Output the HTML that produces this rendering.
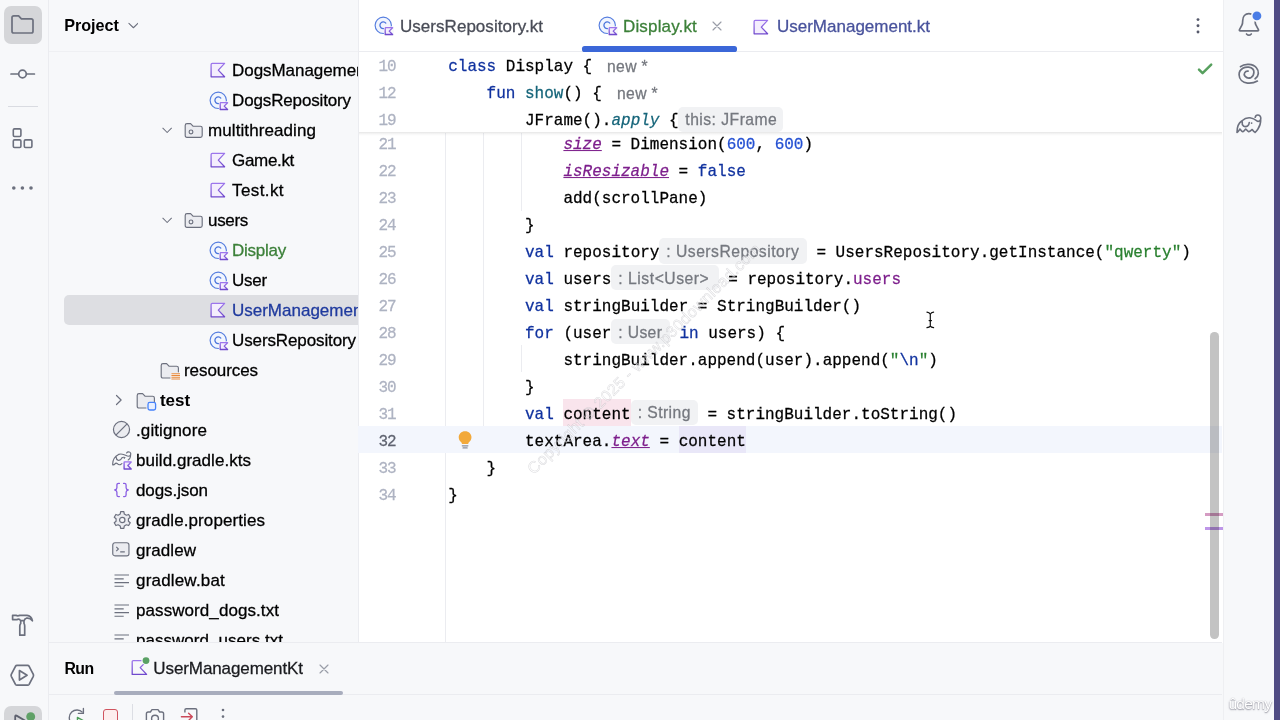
<!DOCTYPE html>
<html><head><meta charset="utf-8"><title>IDE</title>
<style>
*{box-sizing:border-box}
html,body{margin:0;padding:0}
body{will-change:transform;width:1280px;height:720px;overflow:hidden;position:relative;background:#f7f8fa;font-family:"Liberation Sans",sans-serif}
.ab{position:absolute}
.lstrip{position:absolute;left:0;top:0;width:49px;height:720px;background:#f7f8fa;border-right:1px solid #ebecf0}
.ppanel{position:absolute;left:49px;top:0;width:309px;height:643px;background:#f7f8fa}
.selbtn{position:absolute;background:#d5d6d9;border-radius:7px}
.treeclip{position:absolute;left:49px;top:52px;width:309px;height:590.5px;overflow:hidden}
.treeclip>*{margin-left:-49px;margin-top:-52px}
.lb{position:absolute;white-space:pre;line-height:20px;height:20px;font-family:"Liberation Sans",sans-serif}
.ed{position:absolute;left:358px;top:0;width:865.5px;height:643px;background:#fff;border-left:1px solid #ebecf0}
.cl{position:absolute;white-space:pre;font:16px/27px "Liberation Mono",monospace;height:27px;transform:scaleY(1.035);transform-origin:0 17px;-webkit-text-stroke:0.25px}
.ln{color:#aeb3c2;letter-spacing:-1.1px}
.pi{font-style:italic;text-decoration:underline;text-decoration-thickness:1.2px;text-underline-offset:1.2px}
.it{font-style:italic}
.hb{position:absolute;background:#f1f2f4;border-radius:5px}
.sticky{position:absolute;left:359px;top:52px;width:863px;height:80px;background:#fff}
.sticky:after{content:'';position:absolute;left:0;right:0;top:80px;height:4px;background:linear-gradient(rgba(0,0,0,.10),rgba(0,0,0,.03) 50%,rgba(0,0,0,0))}
.selrow .kbg,.selrow{}
.edi .kbg{fill:#fff}
.wm{font:16px "Liberation Sans",sans-serif;color:rgba(255,255,255,.55);-webkit-text-stroke:0.55px rgba(110,110,120,.24);transform-origin:0 0;transform:translate(4px,113px) rotate(-44.6deg);white-space:pre;letter-spacing:.35px}
</style></head>
<body>

<svg width="0" height="0" style="position:absolute">
<defs>
<linearGradient id="kg" x1="0" y1="0" x2="0" y2="1"><stop offset="0" stop-color="#9d76ec"/><stop offset="1" stop-color="#7049cd"/></linearGradient>
<symbol id="i-kt" viewBox="0 0 16 16">
  <path d="M2.2 1.4 H14.6 L8.3 8.1 L14.6 14.8 H1.1 V2.5 Q1.1 1.4 2.2 1.4 Z" fill="#f4eefd" stroke="url(#kg)" stroke-width="1.25" stroke-linejoin="round"/>
</symbol>
<symbol id="i-cls" viewBox="0 0 21 21">
  <circle cx="10.25" cy="9.3" r="8.15" fill="#f1f5fe" stroke="#557ddf" stroke-width="1.15"/>
  <path d="M12.8 7.1 A3.35 3.35 0 1 0 12.8 11.5" fill="none" stroke="#4a74dc" stroke-width="1.3" stroke-linecap="round"/>
  <path d="M10.9 10.4 H21 V20 H10.9 Z" fill="#f7f8fa" class="kbg"/>
  <path d="M12.8 11.7 H19.6 L16.2 15.1 L19.6 18.5 H12.2 V12.3 Q12.2 11.7 12.8 11.7 Z" fill="#f4eefd" stroke="url(#kg)" stroke-width="1.3" stroke-linejoin="round"/>
</symbol>
<symbol id="i-pkg" viewBox="0 0 20 18">
  <path d="M1.2 3.4 Q1.2 1.6 3 1.6 H6.6 L9 4.2 H16.4 Q18.2 4.2 18.2 6 V13.6 Q18.2 15.4 16.4 15.4 H3 Q1.2 15.4 1.2 13.6 Z" fill="#ebecf0" stroke="#6c707e" stroke-width="1.15" stroke-linejoin="round"/>
  <circle cx="7" cy="9.9" r="1.9" fill="none" stroke="#6c707e" stroke-width="1.15"/>
</symbol>
<symbol id="i-res" viewBox="0 0 22 20">
  <path d="M1.2 3.4 Q1.2 1.6 3 1.6 H6.6 L9 4.2 H16.6 Q18.4 4.2 18.4 6 V11 H11 V16 H3 Q1.2 16 1.2 14.2 Z" fill="#ebecf0" stroke="none"/>
  <path d="M10 16 H3 Q1.2 16 1.2 14.2 V3.4 Q1.2 1.6 3 1.6 H6.6 L9 4.2 H16.6 Q18.4 4.2 18.4 6 V9.8" fill="none" stroke="#6c707e" stroke-width="1.15" stroke-linejoin="round" stroke-linecap="round"/>
  <path d="M11.4 11.7 H20 M11.4 13.5 H20 M11.4 15.2 H20 M11.4 16.9 H20" stroke="#e8883a" stroke-width="1.05" fill="none"/>
</symbol>
<symbol id="i-tst" viewBox="0 0 22 20">
  <path d="M1.2 3.4 Q1.2 1.6 3 1.6 H6.6 L9 4.2 H16.6 Q18.4 4.2 18.4 6 V11 H11 V16 H3 Q1.2 16 1.2 14.2 Z" fill="#ebecf0" stroke="none"/>
  <path d="M10 16 H3 Q1.2 16 1.2 14.2 V3.4 Q1.2 1.6 3 1.6 H6.6 L9 4.2 H16.6 Q18.4 4.2 18.4 6 V9.4" fill="none" stroke="#6c707e" stroke-width="1.15" stroke-linejoin="round" stroke-linecap="round"/>
  <rect x="12" y="10.4" width="7.6" height="7.6" rx="1.8" fill="#e7efff" stroke="#4682fa" stroke-width="1.3"/>
</symbol>
<symbol id="i-ign" viewBox="0 0 19 19">
  <circle cx="9.5" cy="9.5" r="8.05" fill="#ebecf0" stroke="#6c707e" stroke-width="1.2"/>
  <path d="M3.9 15.1 L15.1 3.9" stroke="#6c707e" stroke-width="1.2"/>
</symbol>
<symbol id="i-gkts" viewBox="0 0 21 20">
  <path d="M0.7 13.8 C0.5 10 2.4 5.6 6.6 3.4 C9.4 2.4 12.4 3.6 14.2 4.6 C15.4 5.3 17 5.6 18.2 4.4 C19.4 3 18.4 0.9 16.6 0.8 C15.6 0.8 14.9 1.3 14.6 1.9 M18.6 4 C18.6 6 17.6 8.2 16.2 9 M4.1 5.9 C4.2 7.6 4.8 8.8 6 9.2 C7.6 9.6 9 8.6 9.8 7.2 M9.9 6.7 C10.8 6.2 12 6.2 12.9 6.5 M0.7 13.8 C1.4 13.9 2.4 13.6 3 12.8 C3.6 12 4.6 12 5.4 12.7 C6.2 13.6 7.4 14 8.4 13.6 C9 13.4 9.6 13 9.9 12.5" fill="none" stroke="#6c707e" stroke-width="1.15" stroke-linecap="round" stroke-linejoin="round"/>
  <circle cx="12.3" cy="7.5" r="0.6" fill="#6c707e"/>
  <path d="M12.7 10.9 H19.2 L15.8 14.5 L19.2 18.05 H12.1 V11.5 Q12.1 10.9 12.7 10.9 Z" fill="#f4eefd" stroke="url(#kg)" stroke-width="1.4" stroke-linejoin="round"/>
</symbol>
<symbol id="i-json" viewBox="0 0 17 16">
  <path d="M6.4 1.4 H5.6 Q3.9 1.4 3.9 3.1 V5.8 Q3.9 7.6 1.7 8 Q3.9 8.4 3.9 10.2 V12.9 Q3.9 14.6 5.6 14.6 H6.4 M10.6 1.4 H11.4 Q13.1 1.4 13.1 3.1 V5.8 Q13.1 7.6 15.3 8 Q13.1 8.4 13.1 10.2 V12.9 Q13.1 14.6 11.4 14.6 H10.6" fill="none" stroke="#8b5fe3" stroke-width="1.3" stroke-linecap="round" stroke-linejoin="round"/>
</symbol>
<symbol id="i-gear" viewBox="0 0 18.5 20">
  <path d="M11.30 4.04 L10.86 1.71 L7.64 1.71 L7.20 4.04 L5.12 5.25 L2.87 4.46 L1.26 7.25 L3.07 8.80 L3.07 11.20 L1.26 12.75 L2.87 15.54 L5.12 14.75 L7.20 15.96 L7.64 18.29 L10.86 18.29 L11.30 15.96 L13.38 14.75 L15.63 15.54 L17.24 12.75 L15.43 11.20 L15.43 8.80 L17.24 7.25 L15.63 4.46 L13.38 5.25 Z" fill="#ebecf0" stroke="#6c707e" stroke-width="1.2" stroke-linejoin="round"/>
  <circle cx="9.25" cy="10" r="2.7" fill="#f7f8fa" stroke="#6c707e" stroke-width="1.2"/>
</symbol>
<symbol id="i-term" viewBox="0 0 18 15">
  <rect x="0.75" y="0.75" width="16.2" height="13.1" rx="2.2" fill="#ebecf0" stroke="#6c707e" stroke-width="1.15"/>
  <path d="M4.3 4.9 L6.4 7 L4.3 9.1 M8.2 9.8 H12.8" fill="none" stroke="#6c707e" stroke-width="1.15"/>
</symbol>
<symbol id="i-txt" viewBox="0 0 16 14">
  <path d="M0.5 1 H15 M0.5 4.8 H9.7 M0.5 8.6 H15 M0.5 12.2 H9.7" stroke="#6c707e" stroke-width="1.15" fill="none"/>
</symbol>
<symbol id="i-chd" viewBox="0 0 12 8">
  <path d="M1 1.4 L6 6.4 L11 1.4" fill="none" stroke="#6c707e" stroke-width="1.2" stroke-linecap="round" stroke-linejoin="round"/>
</symbol>
<symbol id="i-chr" viewBox="0 0 8 12">
  <path d="M1.5 1.5 L6.1 6 L1.5 10.5" fill="none" stroke="#6c707e" stroke-width="1.2" stroke-linecap="round" stroke-linejoin="round"/>
</symbol>
</defs>
</svg>

<div class="lstrip"></div>
<div class="selbtn" style="left:4px;top:6px;width:38px;height:38px"></div>
<svg class="ab" style="left:10px;top:13px" width="25" height="22" viewBox="0 0 25 22"><path d="M2 4.6 Q2 2.8 3.8 2.8 H8.6 L11.4 5.8 H21.2 Q23 5.8 23 7.6 V18.2 Q23 20 21.2 20 H3.8 Q2 20 2 18.2 Z" fill="none" stroke="#6c707e" stroke-width="1.7" stroke-linejoin="round"/></svg>
<svg class="ab" style="left:8px;top:66px" width="30" height="16" viewBox="0 0 30 16"><path d="M3 8 H10.2 M18.8 8 H26.4" stroke="#6c707e" stroke-width="1.7" stroke-linecap="round"/><circle cx="14.5" cy="8" r="3.8" fill="none" stroke="#6c707e" stroke-width="1.7"/></svg>
<div class="ab" style="left:8px;top:106px;width:30px;height:1px;background:#d9dbe1"></div>
<svg class="ab" style="left:11px;top:127px" width="24" height="23" viewBox="0 0 24 23"><g fill="none" stroke="#6c707e" stroke-width="1.6"><rect x="2.3" y="1.9" width="7.6" height="7.6" rx="1.2"/><rect x="2.3" y="12.9" width="7.6" height="7.6" rx="1.2"/><rect x="13.3" y="12.9" width="7.6" height="7.6" rx="1.2"/></g></svg>
<svg class="ab" style="left:10px;top:184px" width="26" height="8" viewBox="0 0 26 8"><g fill="#6c707e"><circle cx="3.8" cy="4" r="1.8"/><circle cx="12.4" cy="4" r="1.8"/><circle cx="21" cy="4" r="1.8"/></g></svg>
<svg class="ab" style="left:10px;top:613px" width="26" height="28" viewBox="0 0 26 28"><path d="M2.6 2.4 H6 Q7.8 3.2 9.8 2.4 H17 C20.2 2.6 21.8 5 22.4 7.8 C20.8 5.6 18.6 4.8 16.4 5.2 C15 5.6 14.4 6.4 14.2 7.6 H10.6 C10 6.6 8.6 6 7.6 6.4 Q6.6 6.8 5.8 6.6 H2.6 Z M10.7 7.6 V10.4 Q9.8 11.6 9.8 13 V22.2 H14.7 V13 Q14.7 11.6 14 10.4 V7.6" fill="none" stroke="#6c707e" stroke-width="1.7" stroke-linejoin="round"/></svg>
<svg class="ab" style="left:9.2px;top:662.7px" width="26.6" height="24.7" viewBox="0 0 28 26"><path d="M8.4 2.6 H19.6 Q20.6 2.6 21.2 3.5 L25.6 12 Q26 13 25.6 14 L21.2 22.5 Q20.6 23.4 19.6 23.4 H8.4 Q7.4 23.4 6.8 22.5 L2.4 14 Q2 13 2.4 12 L6.8 3.5 Q7.4 2.6 8.4 2.6 Z" fill="none" stroke="#6c707e" stroke-width="1.8" stroke-linejoin="round"/><path d="M11 8 L19 13 L11 18 Z" fill="none" stroke="#6c707e" stroke-width="1.8" stroke-linejoin="round"/></svg>
<div class="selbtn" style="left:4px;top:706px;width:38px;height:38px"></div>
<svg class="ab" style="left:10px;top:707px" width="28" height="14" viewBox="0 0 28 14"><path d="M5.2 14 V9.3 Q5.2 7.9 6.5 8.6 L16 14.2" fill="none" stroke="#5d606e" stroke-width="1.8" stroke-linejoin="round"/><circle cx="20.7" cy="9.7" r="4.45" fill="#5fa066"/></svg>
<div class="ppanel"></div>
<div class="lb" style="left:64.3px;top:14.70px;font-size:16.2px;color:#000;font-weight:bold;letter-spacing:-0.056px;">Project</div>
<svg class="ab" style="left:127.6px;top:21.8px" width="10.8" height="7.2" viewBox="0 0 12 8"><use href="#i-chd"/></svg>
<div class="ab" style="left:49px;top:51px;width:309px;height:1px;background:#eff0f3"></div>
<div class="ab" style="left:64px;top:295.3px;width:294px;height:29.5px;background:#dddee2;border-radius:5px 0 0 5px"></div>
<div class="treeclip">
<svg class="ab" style="left:210px;top:62.3px" width="16" height="16"><use href="#i-kt"/></svg>
<div class="lb" style="left:232px;top:61.00px;font-size:17.0px;color:#000;-webkit-text-stroke:0.28px;letter-spacing:-0.051px;">DogsManagement.kt</div>
<svg class="ab" style="left:207.55px;top:90.6px" width="21" height="21"><use href="#i-cls"/></svg>
<div class="lb" style="left:232px;top:91.00px;font-size:17.0px;color:#000;-webkit-text-stroke:0.28px;letter-spacing:-0.140px;">DogsRepository</div>
<svg class="ab" style="left:184px;top:121.5px" width="20" height="18"><use href="#i-pkg"/></svg>
<div class="lb" style="left:208px;top:121.00px;font-size:17.0px;color:#000;-webkit-text-stroke:0.28px;letter-spacing:0.087px;">multithreading</div>
<svg class="ab" style="left:210px;top:152.3px" width="16" height="16"><use href="#i-kt"/></svg>
<div class="lb" style="left:232px;top:151.00px;font-size:17.0px;color:#000;-webkit-text-stroke:0.28px;letter-spacing:-0.321px;">Game.kt</div>
<svg class="ab" style="left:210px;top:182.3px" width="16" height="16"><use href="#i-kt"/></svg>
<div class="lb" style="left:232px;top:181.00px;font-size:17.0px;color:#000;-webkit-text-stroke:0.28px;letter-spacing:0.411px;">Test.kt</div>
<svg class="ab" style="left:184px;top:211.5px" width="20" height="18"><use href="#i-pkg"/></svg>
<div class="lb" style="left:208px;top:211.00px;font-size:17.0px;color:#000;-webkit-text-stroke:0.28px;letter-spacing:-0.316px;">users</div>
<svg class="ab" style="left:207.55px;top:240.6px" width="21" height="21"><use href="#i-cls"/></svg>
<div class="lb" style="left:232px;top:241.00px;font-size:17.0px;color:#3c8039;-webkit-text-stroke:0.28px;letter-spacing:-0.250px;">Display</div>
<svg class="ab" style="left:207.55px;top:270.6px" width="21" height="21"><use href="#i-cls"/></svg>
<div class="lb" style="left:232px;top:271.00px;font-size:17.0px;color:#000;-webkit-text-stroke:0.28px;letter-spacing:-0.227px;">User</div>
<svg class="ab selrow" style="left:210px;top:302.3px" width="16" height="16"><use href="#i-kt"/></svg>
<div class="lb" style="left:232px;top:301.00px;font-size:17.0px;color:#1f3a9e;-webkit-text-stroke:0.28px;letter-spacing:-0.005px;">UserManagement.kt</div>
<svg class="ab" style="left:207.55px;top:330.6px" width="21" height="21"><use href="#i-cls"/></svg>
<div class="lb" style="left:232px;top:331.00px;font-size:17.0px;color:#000;-webkit-text-stroke:0.28px;letter-spacing:-0.110px;">UsersRepository</div>
<svg class="ab" style="left:160px;top:361.8px" width="22" height="20"><use href="#i-res"/></svg>
<div class="lb" style="left:184px;top:361.00px;font-size:17.0px;color:#000;-webkit-text-stroke:0.28px;letter-spacing:-0.071px;">resources</div>
<svg class="ab" style="left:136px;top:391.8px" width="22" height="20"><use href="#i-tst"/></svg>
<div class="lb" style="left:160px;top:391.00px;font-size:17.0px;color:#000;font-weight:bold;letter-spacing:-0.059px;">test</div>
<svg class="ab" style="left:112.3px;top:420.4px" width="19" height="19"><use href="#i-ign"/></svg>
<div class="lb" style="left:136px;top:421.00px;font-size:17.0px;color:#000;-webkit-text-stroke:0.28px;letter-spacing:0.106px;">.gitignore</div>
<svg class="ab" style="left:111.9px;top:450.5px" width="21" height="20"><use href="#i-gkts"/></svg>
<div class="lb" style="left:136px;top:451.00px;font-size:17.0px;color:#000;-webkit-text-stroke:0.28px;letter-spacing:0.041px;">build.gradle.kts</div>
<svg class="ab" style="left:113.2px;top:482.3px" width="17" height="16"><use href="#i-json"/></svg>
<div class="lb" style="left:136px;top:481.00px;font-size:17.0px;color:#000;-webkit-text-stroke:0.28px;letter-spacing:-0.087px;">dogs.json</div>
<svg class="ab" style="left:112.75px;top:510px" width="18.5" height="20"><use href="#i-gear"/></svg>
<div class="lb" style="left:136px;top:511.00px;font-size:17.0px;color:#000;-webkit-text-stroke:0.28px;letter-spacing:0.084px;">gradle.properties</div>
<svg class="ab" style="left:112.4px;top:542px" width="18" height="15"><use href="#i-term"/></svg>
<div class="lb" style="left:136px;top:541.00px;font-size:17.0px;color:#000;-webkit-text-stroke:0.28px;letter-spacing:0.065px;">gradlew</div>
<svg class="ab" style="left:114px;top:573.8px" width="16" height="14"><use href="#i-txt"/></svg>
<div class="lb" style="left:136px;top:571.00px;font-size:17.0px;color:#000;-webkit-text-stroke:0.28px;letter-spacing:0.186px;">gradlew.bat</div>
<svg class="ab" style="left:114px;top:603.8px" width="16" height="14"><use href="#i-txt"/></svg>
<div class="lb" style="left:136px;top:601.00px;font-size:17.0px;color:#000;-webkit-text-stroke:0.28px;letter-spacing:0.074px;">password_dogs.txt</div>
<svg class="ab" style="left:114px;top:633.8px" width="16" height="14"><use href="#i-txt"/></svg>
<div class="lb" style="left:136px;top:631.00px;font-size:17.0px;color:#000;-webkit-text-stroke:0.28px;letter-spacing:0.030px;">password_users.txt</div>
<svg class="ab" style="left:161.65px;top:127.1px" width="10.3" height="6.9" viewBox="0 0 12 8"><use href="#i-chd"/></svg>
<svg class="ab" style="left:161.65px;top:217.1px" width="10.3" height="6.9" viewBox="0 0 12 8"><use href="#i-chd"/></svg>
<svg class="ab" style="left:114.5px;top:394px" width="8" height="12"><use href="#i-chr"/></svg>
</div>
<div class="ed"></div>
<div class="ab" style="left:358px;top:51px;width:865px;height:1px;background:#ebecf0"></div>
<div class="ab" style="left:582px;top:46.4px;width:155px;height:5.2px;background:#3b67d8;border-radius:2.6px"></div>
<svg class="ab edi" style="left:372.5px;top:16.2px" width="21" height="21"><use href="#i-cls"/></svg>
<div class="lb" style="left:400px;top:16.70px;font-size:17.0px;color:#494c57;-webkit-text-stroke:0.28px;letter-spacing:0.036px;">UsersRepository.kt</div>
<svg class="ab edi" style="left:596.5px;top:16.2px" width="21" height="21"><use href="#i-cls"/></svg>
<div class="lb" style="left:623px;top:16.70px;font-size:17.0px;color:#3c8039;-webkit-text-stroke:0.28px;letter-spacing:0.156px;">Display.kt</div>
<svg class="ab" style="left:712px;top:21px" width="10" height="10" viewBox="0 0 10 10"><path d="M1 1 L9 9 M9 1 L1 9" stroke="#9a9da8" stroke-width="1.15" stroke-linecap="round"/></svg>
<svg class="ab" style="left:752.5px;top:18.6px" width="16" height="16"><use href="#i-kt"/></svg>
<div class="lb" style="left:777px;top:16.70px;font-size:17.0px;color:#48529c;-webkit-text-stroke:0.28px;letter-spacing:-0.005px;">UserManagement.kt</div>
<svg class="ab" style="left:1195px;top:17px" width="6" height="18" viewBox="0 0 6 18"><g fill="#55586a"><circle cx="3" cy="2.6" r="1.45"/><circle cx="3" cy="8.8" r="1.45"/><circle cx="3" cy="15" r="1.45"/></g></svg>
<div class="ab" style="left:445px;top:133px;width:1px;height:509px;background:#ebecf0"></div>
<div class="ab" style="left:482.7px;top:133px;width:1px;height:320px;background:#ebecf0"></div>
<div class="ab" style="left:521.2px;top:133px;width:1px;height:77.5px;background:#ebecf0"></div>
<div class="ab" style="left:521.2px;top:345.4px;width:1px;height:27px;background:#ebecf0"></div>
<div class="ab" style="left:358px;top:426.24px;width:864px;height:26.94px;background:#f3f6fd"></div>
<div class="ab" style="left:563.3px;top:399.30px;width:67.3px;height:26.4px;background:#f9e4ec"></div>
<div class="ab" style="left:678.5px;top:426.24px;width:67px;height:26.94px;background:#e9e7f8"></div>
<div class="cl ln" style="left:378.4px;top:132.00px">21</div>
<div class="cl ln" style="left:378.4px;top:159.00px">22</div>
<div class="cl ln" style="left:378.4px;top:186.00px">23</div>
<div class="cl ln" style="left:378.4px;top:213.00px">24</div>
<div class="cl ln" style="left:378.4px;top:240.00px">25</div>
<div class="cl ln" style="left:378.4px;top:267.00px">26</div>
<div class="cl ln" style="left:378.4px;top:294.00px">27</div>
<div class="cl ln" style="left:378.4px;top:321.00px">28</div>
<div class="cl ln" style="left:378.4px;top:348.00px">29</div>
<div class="cl ln" style="left:378.4px;top:375.00px">30</div>
<div class="cl ln" style="left:378.4px;top:402.00px">31</div>
<div class="cl ln" style="left:378.4px;top:429.00px;color:#5f6370">32</div>
<div class="cl ln" style="left:378.4px;top:456.00px">33</div>
<div class="cl ln" style="left:378.4px;top:483.00px">34</div>
<div class="cl" style="left:563.40px;top:132.00px"><span class="pi" style="color:#7d1f8c">size</span><span class="" style="color:#000"> = Dimension(</span><span class="" style="color:#2450d2">600</span><span class="" style="color:#000">, </span><span class="" style="color:#2450d2">600</span><span class="" style="color:#000">)</span></div>
<div class="cl" style="left:563.40px;top:159.00px"><span class="pi" style="color:#7d1f8c">isResizable</span><span class="" style="color:#000"> = </span><span class="" style="color:#10329f">false</span></div>
<div class="cl" style="left:563.40px;top:186.00px"><span class="" style="color:#000">add(scrollPane)</span></div>
<div class="cl" style="left:525.00px;top:213.00px"><span class="" style="color:#000">}</span></div>
<div class="cl" style="left:525.00px;top:240.00px"><span class="" style="color:#10329f">val</span><span class="" style="color:#000"> repository</span></div>
<div class="cl" style="left:806.80px;top:240.00px"><span class="" style="color:#000"> = UsersRepository.getInstance(</span><span class="" style="color:#2a8030">"qwerty"</span><span class="" style="color:#000">)</span></div>
<div class="hb" style="left:659.3px;top:238.26px;width:147.5px;height:25.3px"></div>
<div class="lb" style="left:666.3px;top:241.71px;font-size:15.7px;color:#75787f;-webkit-text-stroke:0.28px;letter-spacing:0.490px;">: UsersRepository</div>
<div class="cl" style="left:525.00px;top:267.00px"><span class="" style="color:#10329f">val</span><span class="" style="color:#000"> users</span></div>
<div class="cl" style="left:718.60px;top:267.00px"><span class="" style="color:#000"> = repository.</span><span class="" style="color:#7d1f8c">users</span></div>
<div class="hb" style="left:611.3px;top:265.20px;width:107.5px;height:25.3px"></div>
<div class="lb" style="left:618.3px;top:268.65px;font-size:15.7px;color:#75787f;-webkit-text-stroke:0.28px;letter-spacing:0.535px;">: List&lt;User&gt;</div>
<div class="cl" style="left:525.00px;top:294.00px"><span class="" style="color:#10329f">val</span><span class="" style="color:#000"> stringBuilder = StringBuilder()</span></div>
<div class="cl" style="left:525.00px;top:321.00px"><span class="" style="color:#10329f">for</span><span class="" style="color:#000"> (user</span></div>
<div class="cl" style="left:669.80px;top:321.00px"><span class="" style="color:#10329f"> in</span><span class="" style="color:#000"> users) {</span></div>
<div class="hb" style="left:611.3px;top:319.08px;width:58.5px;height:25.3px"></div>
<div class="lb" style="left:618.3px;top:322.53px;font-size:15.7px;color:#75787f;-webkit-text-stroke:0.28px;letter-spacing:0.359px;">: User</div>
<div class="cl" style="left:563.40px;top:348.00px"><span class="" style="color:#000">stringBuilder.append(user).append(</span><span class="" style="color:#2a8030">"</span><span class="" style="color:#10329f">\n</span><span class="" style="color:#2a8030">"</span><span class="" style="color:#000">)</span></div>
<div class="cl" style="left:525.00px;top:375.00px"><span class="" style="color:#000">}</span></div>
<div class="cl" style="left:525.00px;top:402.00px"><span class="" style="color:#10329f">val</span><span class="" style="color:#000"> content</span></div>
<div class="cl" style="left:697.80px;top:402.00px"><span class="" style="color:#000"> = stringBuilder.toString()</span></div>
<div class="hb" style="left:630.8px;top:399.90px;width:67.20000000000005px;height:25.3px"></div>
<div class="lb" style="left:637.8px;top:403.35px;font-size:15.7px;color:#75787f;-webkit-text-stroke:0.28px;letter-spacing:0.412px;">: String</div>
<div class="cl" style="left:525.00px;top:429.00px"><span class="" style="color:#000">textArea.</span><span class="pi" style="color:#7d1f8c">text</span><span class="" style="color:#000"> = content</span></div>
<div class="cl" style="left:486.60px;top:456.00px"><span class="" style="color:#000">}</span></div>
<div class="cl" style="left:448.20px;top:483.00px"><span class="" style="color:#000">}</span></div>
<svg class="ab" style="left:456.6px;top:430px" width="16.2" height="20" viewBox="0 0 17 21"><path d="M8.5 1.2 C4.6 1.2 1.8 4 1.8 7.6 C1.8 10 3 11.6 4.4 12.8 C5 13.4 5.2 14 5.2 14.6 H11.8 C11.8 14 12 13.4 12.6 12.8 C14 11.6 15.2 10 15.2 7.6 C15.2 4 12.4 1.2 8.5 1.2 Z" fill="#f2a93b"/><path d="M5.6 16.6 H11.4 M6.4 18.8 H10.6" stroke="#8a8e99" stroke-width="1.4" stroke-linecap="round"/></svg>
<div class="sticky"></div>
<div class="cl ln" style="left:378.4px;top:54.00px">10</div>
<div class="cl ln" style="left:378.4px;top:81.00px">12</div>
<div class="cl ln" style="left:378.4px;top:108.00px">19</div>
<div class="cl" style="left:448.20px;top:54.00px"><span class="" style="color:#10329f">class</span><span class="" style="color:#000"> Display {</span></div>
<div class="lb" style="left:607px;top:56.90px;font-size:15.7px;color:#75787f;-webkit-text-stroke:0.28px;letter-spacing:0.350px;">new *</div>
<div class="cl" style="left:486.60px;top:81.00px"><span class="" style="color:#10329f">fun</span><span class="" style="color:#16657a"> show</span><span class="" style="color:#000">() {</span></div>
<div class="lb" style="left:617px;top:83.85px;font-size:15.7px;color:#75787f;-webkit-text-stroke:0.28px;letter-spacing:0.350px;">new *</div>
<div class="cl" style="left:525.00px;top:108.00px"><span class="" style="color:#000">JFrame().</span><span class="it" style="color:#16657a">apply</span><span class="" style="color:#000"> {</span></div>
<div class="hb" style="left:678.3px;top:106.50px;width:105.20000000000005px;height:25.3px"></div>
<div class="lb" style="left:685.3px;top:109.95px;font-size:15.7px;color:#75787f;-webkit-text-stroke:0.28px;letter-spacing:0.475px;">this: JFrame</div>
<svg class="ab" style="left:1197px;top:62px" width="16" height="14" viewBox="0 0 16 14"><path d="M2 7.6 L5.6 11.2 L14.2 2.6" fill="none" stroke="#57a05e" stroke-width="2.5" stroke-linecap="round" stroke-linejoin="round"/></svg>
<div class="ab" style="left:1205px;top:513px;width:18.3px;height:2.9px;background:#d59cc3"></div>
<div class="ab" style="left:1205px;top:527px;width:18.3px;height:3px;background:#be96e8"></div>
<div class="ab" style="left:1210.4px;top:331.5px;width:8.5px;height:307.5px;background:rgba(0,0,0,.235);border-radius:4.2px"></div>
<svg class="ab" style="left:925px;top:311px" width="11" height="18" viewBox="0 0 11 18"><path d="M1.95 1.2 Q4.4 1.6 5.3 3.2 Q6.2 1.6 8.6 1.2 M5.3 3.2 V15.1 M1.95 16.7 Q4.4 16.3 5.3 15.1 Q6.2 16.3 8.6 16.7 M4.1 9.55 H6.5" fill="none" stroke="#fff" stroke-width="2.6" stroke-linecap="round" opacity=".8"/><path d="M1.95 1.2 Q4.4 1.6 5.3 3.2 Q6.2 1.6 8.6 1.2 M5.3 3.2 V15.1 M1.95 16.7 Q4.4 16.3 5.3 15.1 Q6.2 16.3 8.6 16.7 M4.1 9.55 H6.5" fill="none" stroke="#111" stroke-width="1.2" stroke-linecap="round"/></svg>
<div class="ab" style="left:1223px;top:0;width:51px;height:720px;background:#f7f8fa;border-left:1px solid #eeeff2"></div>
<div class="ab" style="left:1274px;top:0;width:6px;height:720px;background:#4f4b83"></div>
<svg class="ab" style="left:1237px;top:11px" width="26" height="27" viewBox="0 0 26 27"><path d="M11.9 2.7 C8.2 2.7 5.7 5.6 5.7 9.7 C5.7 11.4 5.6 12.8 4.9 14.1 L2.5 18.6 Q2 19.9 3.3 19.9 H20.6 Q21.9 19.9 21.4 18.6 L19 14.1 C18.2 12.8 18.1 11.4 18.1 9.7 C18.1 5.6 15.6 2.7 11.9 2.7 Z" fill="none" stroke="#6c707e" stroke-width="1.7" stroke-linejoin="round"/><path d="M9.5 23 Q11.9 25.4 14.3 23" fill="none" stroke="#6c707e" stroke-width="1.7" stroke-linecap="round"/><circle cx="19.9" cy="4.9" r="6" fill="#f7f8fa"/><circle cx="19.9" cy="4.9" r="4.4" fill="#4a7de6"/></svg>
<svg class="ab" style="left:1237px;top:63px" width="24" height="22" viewBox="0 0 24 22"><path d="M3.5 3.7 C5.6 2 8.6 1.2 11.7 1.4 C15 1.6 17.8 2.8 19.4 4.8 C20.8 6.4 21.5 8.4 21.3 10.6 C21.1 12.8 19.8 14.6 18.1 15.8 M20.4 18.1 C17.4 19.8 14 20.4 10.5 20.1 C5.6 19.6 2.2 16.2 2.1 11.7 C2 9 3.6 6.6 5.8 5.25 C7.6 4.2 9.8 3.9 11.7 4.1 C15 4.6 17 6.8 16.9 9.3 C16.8 12 15.6 13.8 14 14.6 C12 15.4 9.6 15 8.2 13.4 C7.2 12.2 7 10.8 7.6 9.9 C8.4 8.6 9.8 8 11.1 8.2" fill="none" stroke="#6c707e" stroke-width="1.7" stroke-linecap="round"/></svg>
<svg class="ab" style="left:1235px;top:113px" width="28" height="22" viewBox="0 0 28 22"><path d="M2 19.4 C2 14 3.6 10 6.7 8 C9.4 5.6 13 4.4 16 5 C18.6 5.4 20.6 7 22.4 8.3 C24 8.6 25.6 7.6 25.8 5.6 C26 3.6 24.6 2 22.8 2 C21.4 2 20.4 3 20.2 4.3 M25.7 6.4 C25.8 10 24.6 13.6 22.8 16.2 C22 17.4 21 18.6 20.1 19.4 M2 19.4 C3.4 18.8 4 17.2 4.9 16 C6 17 6.6 18.4 7.8 18.8 C9 18.2 9.8 17 10.75 16 C11.8 17 12.6 18.4 13.7 18.8 C15 18.4 16 17.4 17.2 16.5 C18 17.6 19 18.8 20.1 19.4 M7.25 8.9 C7 10.6 7.4 12.2 8.4 13 C9.8 13.8 11.6 13.6 12.5 13 C13.6 12.2 14.2 11 14.25 9.5" fill="none" stroke="#6c707e" stroke-width="1.6" stroke-linecap="round" stroke-linejoin="round"/><circle cx="16.6" cy="10.1" r="0.9" fill="#6c707e"/></svg>
<div class="ab" style="left:49px;top:642px;width:1173px;height:78px;background:#f7f8fa;border-top:1px solid #ebecf0"></div>
<div class="lb" style="left:64.5px;top:658.50px;font-size:15.8px;color:#000;font-weight:bold;letter-spacing:-0.573px;">Run</div>
<svg class="ab" style="left:130.5px;top:656px" width="20" height="20" viewBox="0 0 20 20"><path d="M2.2 4.6 H11 M15.2 5.6 L9.2 11.6 L15.6 18.4 H1.2 V5.6 Q1.2 4.6 2.2 4.6" fill="none" stroke="url(#kg)" stroke-width="1.3" stroke-linejoin="round" stroke-linecap="round"/><circle cx="15" cy="4.6" r="4.6" fill="#f7f8fa"/><circle cx="15" cy="4.6" r="3.4" fill="#5aa164"/></svg>
<div class="lb" style="left:153.3px;top:658.80px;font-size:17.0px;color:#1a1b1f;-webkit-text-stroke:0.28px;letter-spacing:-0.093px;">UserManagementKt</div>
<svg class="ab" style="left:318.5px;top:663.5px" width="10" height="10" viewBox="0 0 10 10"><path d="M1 1 L9 9 M9 1 L1 9" stroke="#9a9da8" stroke-width="1.15" stroke-linecap="round"/></svg>
<div class="ab" style="left:49px;top:694.2px;width:1173px;height:1px;background:#ebecf0"></div>
<div class="ab" style="left:114px;top:690.8px;width:228.5px;height:4.2px;background:#a8adbd;border-radius:2.1px"></div>
<svg class="ab" style="left:67.5px;top:706.5px" width="20" height="16" viewBox="0 0 20 16"><path d="M3.4 16 A7 7 0 0 1 14.6 5.4" fill="none" stroke="#6c707e" stroke-width="1.35"/><path d="M15.4 1.4 V6.4 H10.4" fill="none" stroke="#6c707e" stroke-width="1.35" stroke-linejoin="round" stroke-linecap="round"/><path d="M9.4 10.4 L18 15 L9.4 19.6 Z" fill="#dff0e1" stroke="#4f9e5b" stroke-width="1.3" stroke-linejoin="round"/></svg>
<div class="ab" style="left:103.3px;top:709.2px;width:15.2px;height:16px;border:1.5px solid #d0545f;border-radius:3px;background:#fdeeee"></div>
<div class="ab" style="left:131.8px;top:704px;width:1px;height:16px;background:#dcdee4"></div>
<svg class="ab" style="left:145px;top:707px" width="20" height="14" viewBox="0 0 20 14"><path d="M1.4 14 V6.8 Q1.4 5 3.2 5 H5.4 L7 2.6 H13 L14.6 5 H16.8 Q18.6 5 18.6 6.8 V14" fill="none" stroke="#6c707e" stroke-width="1.4" stroke-linejoin="round"/><circle cx="10" cy="11.6" r="3.4" fill="none" stroke="#6c707e" stroke-width="1.4"/></svg>
<svg class="ab" style="left:180px;top:707px" width="20" height="15" viewBox="0 0 20 15"><path d="M4.9 5.6 V3 Q4.9 1.7 6.3 1.7 H15.4 Q16.8 1.7 16.8 3 V15" fill="none" stroke="#6c707e" stroke-width="1.4"/><path d="M1.4 9.8 H12.2 M8.6 6.2 L12.3 9.8 L8.6 13.4" fill="none" stroke="#cb4a5a" stroke-width="1.4" stroke-linecap="round" stroke-linejoin="round"/></svg>
<svg class="ab" style="left:219.5px;top:707px" width="6" height="14" viewBox="0 0 6 14"><g fill="#6c707e"><circle cx="3" cy="3" r="1.3"/><circle cx="3" cy="9.6" r="1.3"/></g></svg>
<div class="ab" style="left:1228.5px;top:694px;font:15.5px/20px 'Liberation Sans',sans-serif;color:#fff;letter-spacing:-0.75px;text-shadow:0 1px 1.5px rgba(100,100,115,.7),0 0 1px rgba(110,110,125,.5)">ûdemy</div>
<div class="ab wm" style="left:520px;top:352px">Copyright © 2025 - www.p30download.com</div>
</body></html>
